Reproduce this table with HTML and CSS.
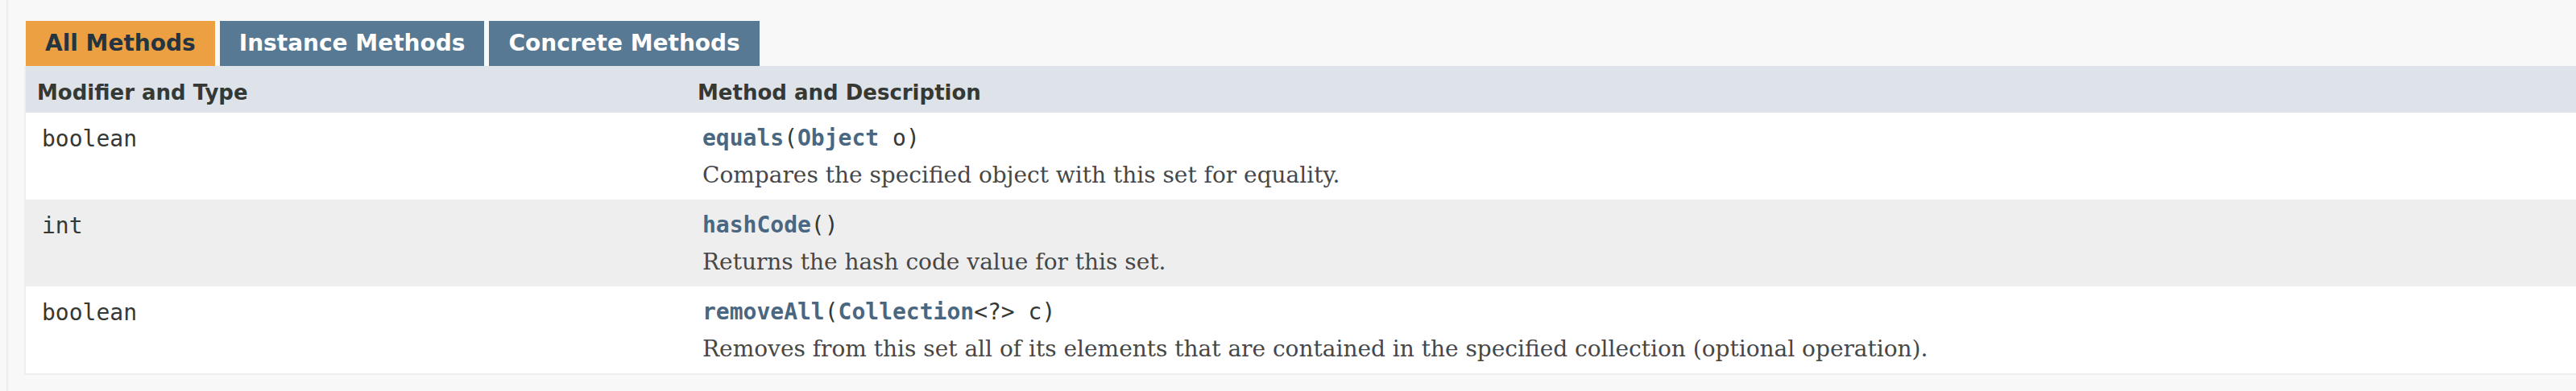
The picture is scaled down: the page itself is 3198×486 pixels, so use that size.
FILE: index.html
```html
<!DOCTYPE html>
<html lang="en">
<head>
<meta charset="utf-8">
<title>Method Summary</title>
<link rel="stylesheet" href="styles.css">
</head>
<body>
<div class="section">
  <div class="tabs">
    <span class="tab active">All Methods</span>
    <span class="tab">Instance Methods</span>
    <span class="tab">Concrete Methods</span>
  </div>
  <div class="summary">
    <div class="row head">
      <div class="th">Modifier and Type</div>
      <div class="th">Method and Description</div>
    </div>
    <div class="row alt">
      <div class="td first"><code class="mod">boolean</code></div>
      <div class="td last">
        <div class="sig"><a class="name">equals</a>(<a class="type">Object</a>&nbsp;o)</div>
        <div class="desc">Compares the specified object with this set for equality.</div>
      </div>
    </div>
    <div class="row gray">
      <div class="td first"><code class="mod">int</code></div>
      <div class="td last">
        <div class="sig"><a class="name">hashCode</a>()</div>
        <div class="desc">Returns the hash code value for this set.</div>
      </div>
    </div>
    <div class="row alt">
      <div class="td first"><code class="mod">boolean</code></div>
      <div class="td last">
        <div class="sig"><a class="name">removeAll</a>(<a class="type">Collection</a>&lt;?&gt;&nbsp;c)</div>
        <div class="desc">Removes from this set all of its elements that are contained in the specified collection (optional operation).</div>
      </div>
    </div>
  </div>
</div>
</body>
</html>
```

FILE: styles.css
```css
html, body {
  margin: 0;
  padding: 0;
  background: #f8f8f8;
}

body {
  overflow: hidden;
  font-family: "DejaVu Sans", "Liberation Sans", Arial, sans-serif;
  color: #353833;
}

.section {
  margin-left: 8px;
  border-left: 2px solid #ececec;
  padding: 26px 0 20px 20px;
  min-height: 440px;
}

.tabs {
  display: flex;
  gap: 6px;
  padding-left: 2px;
}

.tab {
  display: block;
  height: 32px;
  padding: 10px 24px 14px 24px;
  font-size: 28px;
  line-height: 35px;
  font-weight: bold;
  white-space: nowrap;
  background: #587993;
  color: #ffffff;
}

.tab.active {
  background: #eda042;
  color: #253441;
}

.summary {
  border-left: 2px solid #eeeeee;
  border-bottom: 2px solid #eeeeee;
}

.row {
  display: grid;
  grid-template-columns: 820px 1fr;
}

.row.head {
  background: #dee3e9;
}

.row.alt {
  background: #ffffff;
}

.row.gray {
  background: #eeeeef;
}

.th {
  padding: 16px 6px 8px 14px;
  font-size: 26px;
  line-height: 34px;
  font-weight: bold;
  color: #353833;
  white-space: nowrap;
}

.td {
  padding: 16px 6px 10px 20px;
}

.mod {
  display: block;
  font-family: "DejaVu Sans Mono", "Liberation Mono", monospace;
  font-size: 28px;
  line-height: 34px;
  color: #353833;
}

.sig {
  font-family: "DejaVu Sans Mono", "Liberation Mono", monospace;
  font-size: 28px;
  line-height: 32px;
  color: #353833;
  white-space: nowrap;
}

.sig a {
  color: #4a6782;
  font-weight: bold;
  text-decoration: none;
}

.desc {
  margin-top: 10px;
  font-family: "DejaVu Serif", "Liberation Serif", Georgia, serif;
  font-size: 28px;
  line-height: 40px;
  color: #474747;
  white-space: nowrap;
}
```
